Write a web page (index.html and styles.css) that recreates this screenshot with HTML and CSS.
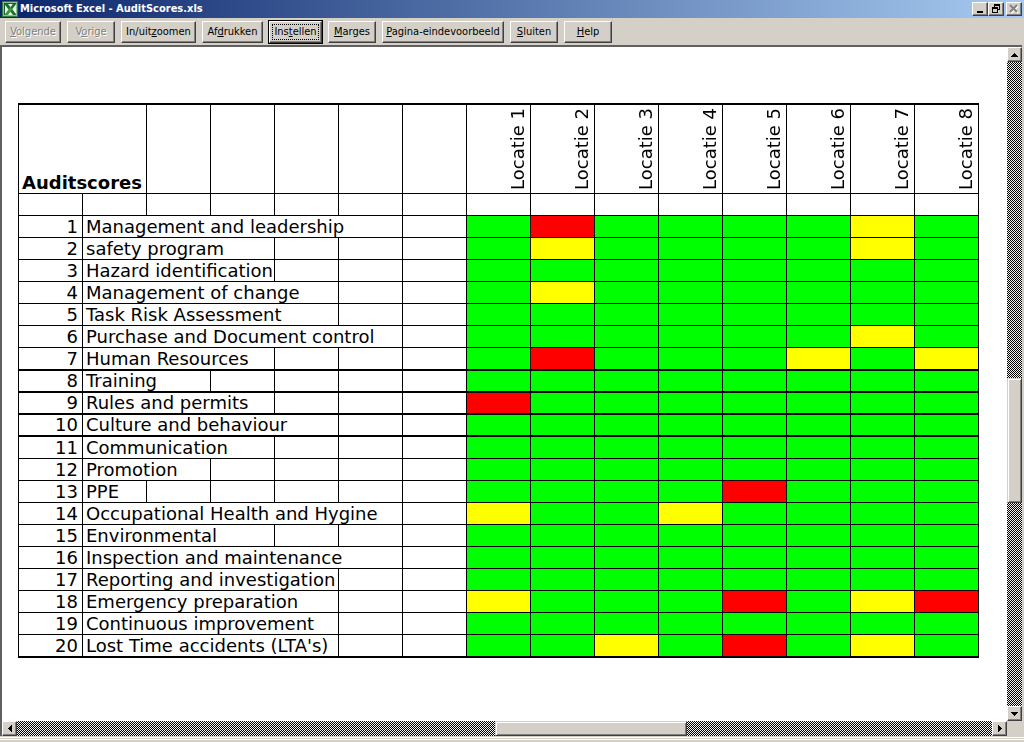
FILE: index.html
```html
<!DOCTYPE html>
<html lang="nl">
<head>
<meta charset="utf-8">
<title>Microsoft Excel - AuditScores.xls</title>
<link rel="stylesheet" href="styles.css">
</head>
<body>
<header class="titlebar">
  <svg class="app-icon" viewBox="0 0 16 16" aria-hidden="true">
    <rect width="16" height="16" fill="#2f7a3c"/>
    <rect x="1" y="1" width="14" height="14" fill="#8cc08c"/>
    <rect x="2" y="2" width="12" height="12" fill="#1d5c2a"/>
    <rect x="3" y="3" width="11" height="11" fill="#e8f4e4"/>
    <path d="M3 3h3l8 10v1h-3L3 4z" fill="#1f7030"/>
    <path d="M11 3h3L6 14H3v-1z" fill="#3a9548"/>
    <path d="M11 3h3l-4 5-1-2z" fill="#1f7030"/>
  </svg>
  <h1 class="title">Microsoft Excel - AuditScores.xls</h1>
  <div class="window-buttons">
    <button class="winbtn" aria-label="Minimaliseren"><svg viewBox="0 0 12 10"><path d="M3 7h6v2H3z"/></svg></button>
    <button class="winbtn" aria-label="Herstellen"><svg viewBox="0 0 12 10"><path d="M4 0h6v6H8V5h1V2H5v1H4zM2 3h6v6H2zM3 5v3h4V5z" fill-rule="evenodd"/></svg></button>
    <button class="winbtn close" aria-label="Sluiten" disabled><svg viewBox="0 0 12 10"><path d="M3 2l7 7M10 2L3 9" stroke="#fff" stroke-width="2"/><path d="M2 1l7 7M9 1L2 8" stroke="#808080" stroke-width="2"/></svg></button>
  </div>
</header>
<nav class="toolbar">
  <button class="btn w56" disabled><u>V</u>olgende</button>
  <button class="btn" disabled>V<u>o</u>rige</button>
  <button class="btn w75">In/uit<u>z</u>oomen</button>
  <button class="btn w61">Af<u>d</u>rukken</button>
  <button class="btn w53 default"><span class="focus">Ins<u>t</u>ellen</span></button>
  <button class="btn"><u>M</u>arges</button>
  <button class="btn w122"><u>P</u>agina-eindevoorbeeld</button>
  <button class="btn"><u>S</u>luiten</button>
  <button class="btn"><u>H</u>elp</button>
</nav>
<div class="workspace">
  <main class="sheet">
    <table class="scores">
      <thead>
        <tr class="head">
          <th class="name" colspan="2" scope="col">Auditscores</th>
          <td></td><td></td><td></td><td></td><td></td>
          <th class="place" scope="col"><span class="up">Locatie 1</span></th>
          <th class="place" scope="col"><span class="up">Locatie 2</span></th>
          <th class="place" scope="col"><span class="up">Locatie 3</span></th>
          <th class="place" scope="col"><span class="up">Locatie 4</span></th>
          <th class="place" scope="col"><span class="up">Locatie 5</span></th>
          <th class="place" scope="col"><span class="up">Locatie 6</span></th>
          <th class="place" scope="col"><span class="up">Locatie 7</span></th>
          <th class="place" scope="col"><span class="up">Locatie 8</span></th>
        </tr>
      </thead>
      <tbody id="rows"></tbody>
    </table>
  </main>
  <div class="scroll vertical">
    <button class="arrow" aria-label="Omhoog"><svg viewBox="0 0 7 4"><path d="M3 0h1v1h1v1h1v1h1v1H0V3h1V2h1V1h1z"/></svg></button>
    <div class="track before"></div><div class="thumb"></div><div class="track after"></div>
    <button class="arrow" aria-label="Omlaag"><svg viewBox="0 0 7 4"><path d="M0 0h7v1H6v1H5v1H4v1H3V3H2V2H1V1H0z"/></svg></button>
  </div>
  <div class="scroll horizontal">
    <button class="arrow" aria-label="Links"><svg class="side" viewBox="0 0 4 7"><path d="M4 0v7H3V6H2V5H1V4H0V3h1V2h1V1h1V0z"/></svg></button>
    <div class="track before"></div><div class="thumb"></div><div class="track after"></div>
    <button class="arrow" aria-label="Rechts"><svg class="side" viewBox="0 0 4 7"><path d="M0 0h1v1h1v1h1v1h1v1H3v1H2v1H1v1H0z"/></svg></button>
  </div>
  <div class="corner"></div>
</div>
<footer class="statusbar"></footer>
<script src="scores.js"></script>
</body>
</html>
```
FILE: styles.css
```css
* { box-sizing: border-box; }

body {
  margin: 0;
  height: 100vh;
  display: flex;
  flex-direction: column;
  overflow: hidden;
  background: #d4d0c8;
  color: #000;
  font-family: Tahoma, "DejaVu Sans Condensed", "DejaVu Sans", sans-serif;
  font-size: 11px;
}

button {
  margin: 0;
  padding: 0;
  background: #d4d0c8;
  color: #000;
  font: inherit;
  border: 1px solid;
  border-color: #fff #404040 #404040 #fff;
  box-shadow: inset -1px -1px #808080;
}

svg { display: block; }

.titlebar {
  height: 18px;
  flex: none;
  display: flex;
  align-items: center;
  gap: 2px;
  padding: 0 2px;
  background: linear-gradient(90deg, #0a246a, #a6caf0);
}

.app-icon { width: 16px; height: 16px; }

.title {
  flex: 1;
  margin: 0;
  color: #fff;
  font-size: 11px;
  font-weight: bold;
  line-height: 18px;
}

.window-buttons { display: flex; }

.winbtn {
  width: 16px;
  height: 14px;
  padding: 1px;
}

.winbtn svg { width: 12px; height: 10px; }

.close { margin-left: 2px; }

.toolbar {
  height: 27px;
  flex: none;
  display: flex;
  align-items: center;
  gap: 6px;
  padding: 0 5px;
}

.btn {
  min-width: 48px;
  height: 22px;
  line-height: 20px;
  white-space: nowrap;
}

.btn:disabled { color: #808080; text-shadow: 1px 1px #fff; }

.w53 { min-width: 53px; }
.w56 { min-width: 56px; }
.w61 { min-width: 61px; }
.w75 { min-width: 75px; }
.w122 { min-width: 122px; }

.default {
  outline: 1px solid #000;
  outline-offset: 0;
}

.focus {
  display: block;
  margin: 0 2px;
  border: 1px dotted #000;
  line-height: 14px;
}

.workspace {
  flex: 1;
  min-height: 0;
  display: grid;
  grid-template: minmax(0, 1fr) 15px / minmax(0, 1fr) 15px;
  margin-right: 2px;
  border: solid #606060;
  border-width: 2px 0 0 2px;
}

.sheet {
  overflow: hidden;
  padding: 56px 28px 0 16px;
  background: #fff;
}

.scores {
  width: 100%;
  table-layout: fixed;
  border-collapse: separate;
  border-spacing: 0;
  border: solid #000;
  border-width: 2px 0 0 1px;
  font-family: "DejaVu Sans", Verdana, sans-serif;
  font-size: 18px;
  line-height: 20px;
}

.scores td,
.scores th {
  height: 22px;
  padding: 0 4px 0 3px;
  border: solid #000;
  border-width: 0 1px 1px 0;
  font-weight: normal;
  text-align: left;
  white-space: nowrap;
}

.scores .head td,
.scores .head th {
  height: 89px;
  vertical-align: bottom;
}

.scores .head .name { font-weight: bold; }

.scores .head .place { padding: 0 2px; }

.up {
  display: block;
  margin-left: auto;
  width: 20px;
  padding-top: 3px;
  line-height: 20px;
  writing-mode: vertical-rl;
  transform: rotate(180deg);
}

.scores .num { text-align: right; }

.scores .good { background: #0f0; }
.scores .fair { background: #ff0; }
.scores .poor { background: #f00; }

.scores .heavy td,
.scores .heavy th { border-bottom-width: 2px; }

.scores .tall td,
.scores .tall th { height: 23px; }

.scores tbody tr:last-child td,
.scores tbody tr:last-child th { border-bottom-width: 2px; height: 23px; }

.scroll { display: flex; }

.vertical { flex-direction: column; }

.track { background: repeating-conic-gradient(#000 0 25%, #f4f2ee 0 50%) 0 0 / 2px 2px; }

.thumb {
  background: #d4d0c8;
  border: 1px solid;
  border-color: #d4d0c8 #404040 #404040 #d4d0c8;
  box-shadow: inset 1px 1px #fff, inset -1px -1px #808080;
}

.vertical .before { flex: 318; }
.vertical .thumb { flex: 124; }
.vertical .after { flex: 204; }
.horizontal .before { flex: 479; }
.horizontal .thumb { flex: 190; }
.horizontal .after { flex: 306; }

.arrow {
  flex: none;
  display: grid;
  place-items: center;
  width: 15px;
  height: 15px;
}

.arrow svg { width: 7px; height: 4px; }
.arrow .side { width: 4px; height: 7px; }

.corner { background: #d4d0c8; }

.statusbar {
  height: 6px;
  flex: none;
  border-top: 1px solid #d4d0c8;
  box-shadow: inset 0 1px #fff, inset 0 2px #d4d0c8, inset 0 3px #fff;
}
```
FILE: scores.js
```js
// [label, columns the label runs over, scores per location, row class]
const audits = [
  ["Management and leadership", 5, "GRGGGGYG"],
  ["safety program", 3, "GYGGGGYG"],
  ["Hazard identification", 3, "GGGGGGGG"],
  ["Management of change", 4, "GYGGGGGG"],
  ["Task Risk Assessment", 4, "GGGGGGGG"],
  ["Purchase and Document control", 5, "GGGGGGYG"],
  ["Human Resources", 3, "GRGGGYGY", "heavy tall"],
  ["Training", 2, "GGGGGGGG", "heavy"],
  ["Rules and permits", 3, "RGGGGGGG", "heavy"],
  ["Culture and behaviour", 4, "GGGGGGGG", "heavy"],
  ["Communication", 3, "GGGGGGGG"],
  ["Promotion", 2, "GGGGGGGG"],
  ["PPE", 1, "GGGGRGGG"],
  ["Occupational Health and Hygine", 5, "YGGYGGGG"],
  ["Environmental", 3, "GGGGGGGG"],
  ["Inspection and maintenance", 5, "GGGGGGGG"],
  ["Reporting and investigation", 4, "GGGGGGGG"],
  ["Emergency preparation", 4, "YGGGRGYR"],
  ["Continuous improvement", 4, "GGGGGGGG"],
  ["Lost Time accidents (LTA's)", 4, "GGYGRGYG"]
];
const colour = { G: "good", Y: "fair", R: "poor" };
const blank = n => "<td></td>".repeat(n);

document.getElementById("rows").innerHTML =
  `<tr>${blank(15)}</tr>` +
  audits.map(([label, span, scores, cls = ""], i) =>
    `<tr class="${cls}"><td class="num">${i + 1}</td>` +
    `<th scope="row" colspan="${span}">${label}</th>${blank(6 - span)}` +
    [...scores].map(s => `<td class="${colour[s]}"></td>`).join("") +
    "</tr>").join("");
```
